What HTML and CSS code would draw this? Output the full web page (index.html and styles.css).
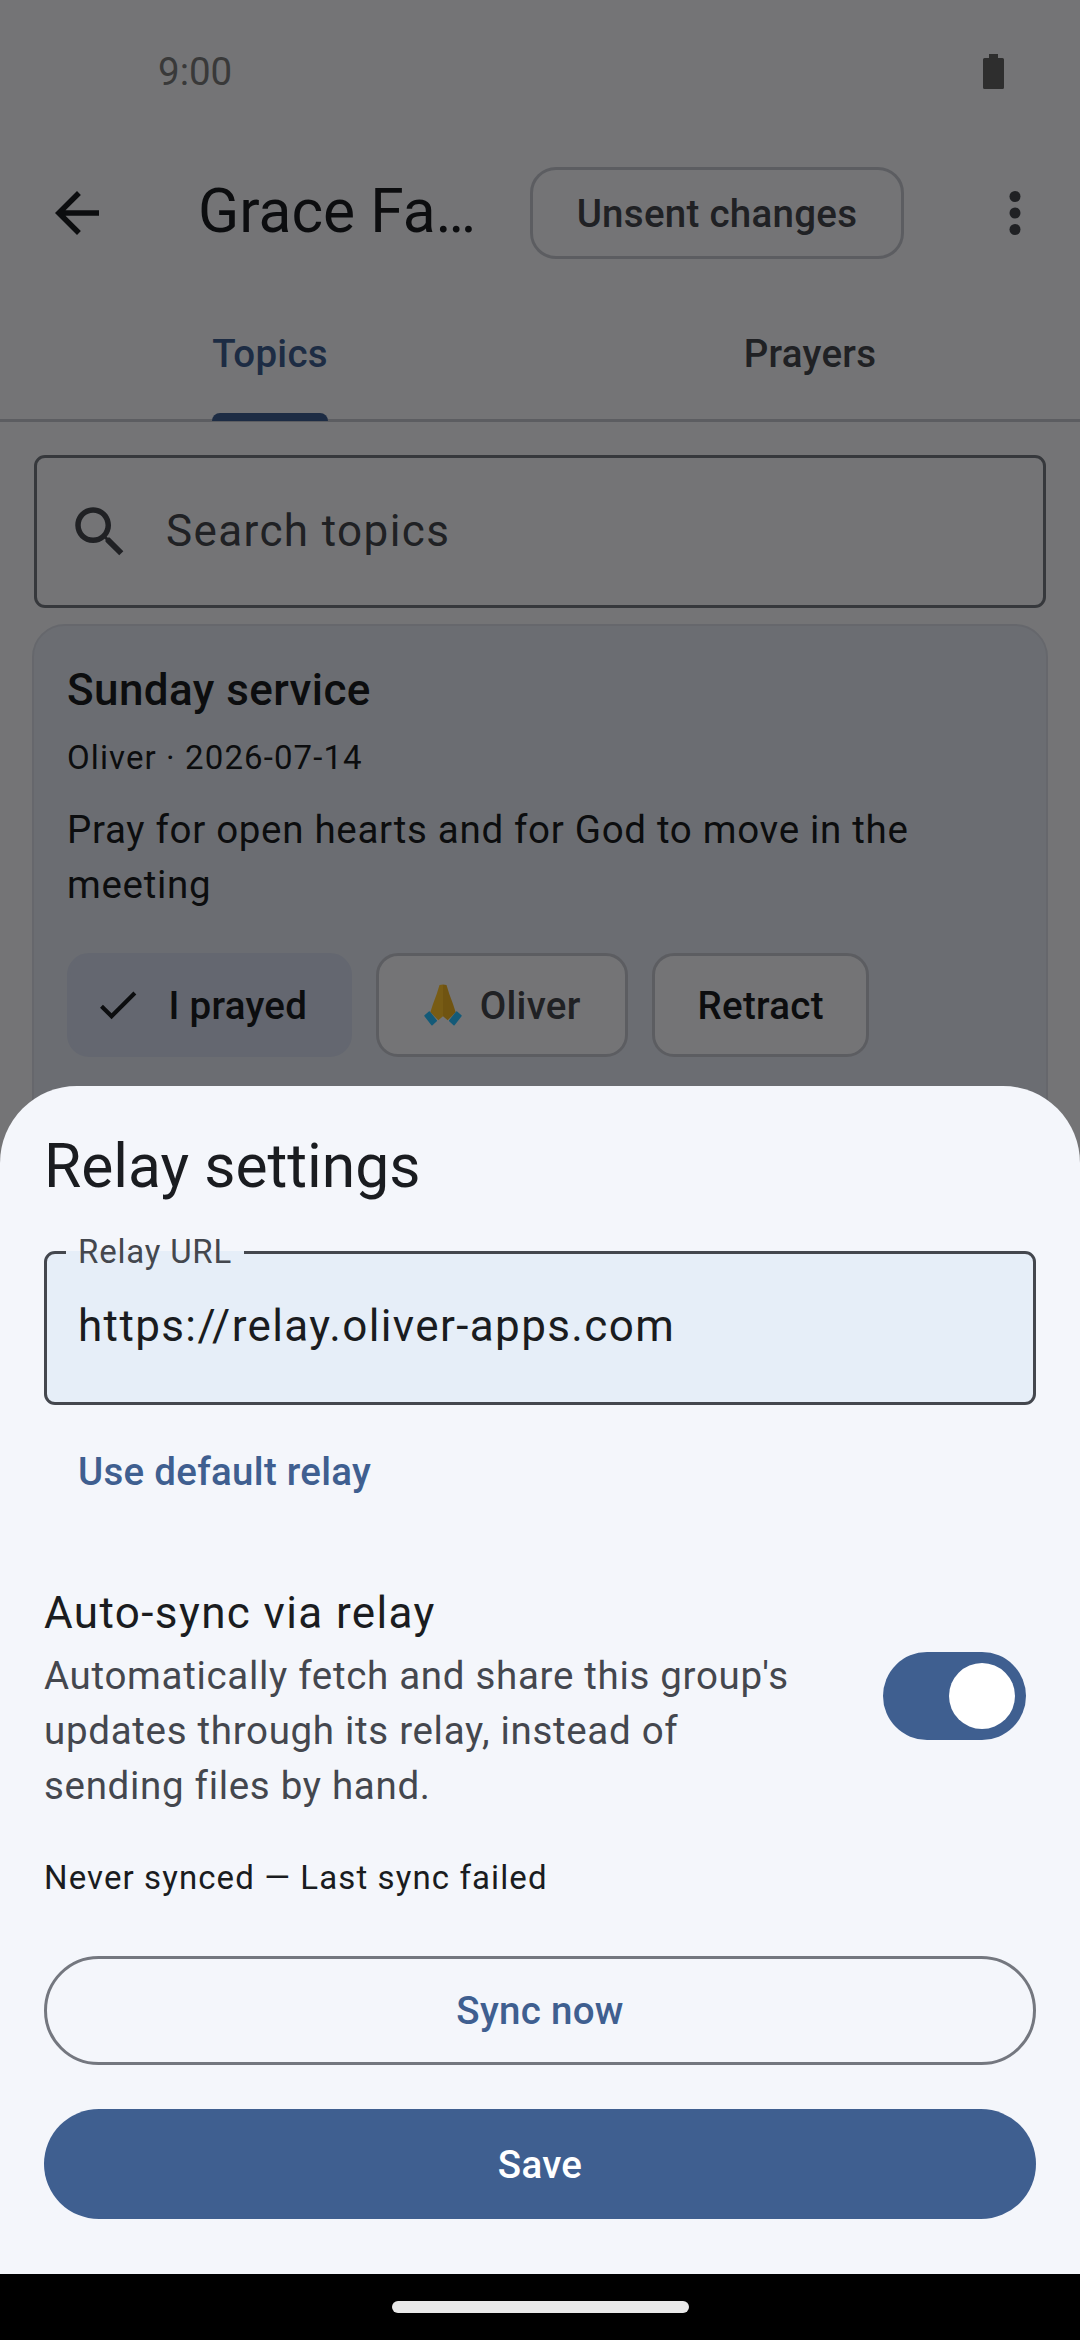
FILE: index.html
```html
<!DOCTYPE html>
<html lang="en">
<head>
  <meta charset="UTF-8">
  <meta name="viewport" content="width=device-width, initial-scale=1.0">
  <title>Relay settings</title>
  <link rel="stylesheet" href="styles.css">
</head>
<body>
  <div class="screen">
    <div class="app">
      <div class="status-bar">
        <span class="time">9:00</span>
        <svg class="battery" viewBox="0 0 21 35"><path d="M6 0h9v4h4.500q1.500 0 1.500 1.500v28q0 1.500-1.500 1.500h-18q-1.500 0-1.500-1.500v-28q0-1.500 1.500-1.500h4.500z"/></svg>
      </div>

      <div class="app-bar">
        <svg class="back-icon" viewBox="0 0 24 24"><path d="M20 11H7.830l5.590-5.590L12 4l-8 8 8 8 1.410-1.410L7.830 13H20v-2z"/></svg>
        <h1 class="group-title">Grace Fa…</h1>
        <div class="unsent-chip">Unsent changes</div>
        <svg class="more-icon" viewBox="0 0 24 24"><circle cx="12" cy="6" r="2"/><circle cx="12" cy="12" r="2"/><circle cx="12" cy="18" r="2"/></svg>
      </div>

      <div class="tabs">
        <div class="tab tab-active"><div class="tab-inner"><span>Topics</span><div class="tab-bar"></div></div></div>
        <div class="tab"><div class="tab-inner"><span>Prayers</span></div></div>
      </div>

      <div class="search-box">
        <svg class="search-icon" viewBox="0 0 24 24"><path d="M15.500 14h-.79l-.28-.27C15.410 12.590 16 11.110 16 9.500 16 5.910 13.090 3 9.500 3S3 5.910 3 9.500 5.910 16 9.500 16c1.610 0 3.090-.59 4.230-1.570l.27.28v.79l5 4.990L20.490 19l-4.990-5zm-6 0C7.010 14 5 11.990 5 9.500S7.010 5 9.500 5 14 7.010 14 9.500 11.990 14 9.500 14z"/></svg>
        <span class="search-text">Search topics</span>
      </div>

      <div class="topic-card">
        <h2 class="topic-title">Sunday service</h2>
        <p class="topic-meta">Oliver · 2026-07-14</p>
        <p class="topic-body">Pray for open hearts and for God to move in the meeting</p>
        <div class="chip-row">
          <div class="chip chip-selected">
            <svg class="check-icon" viewBox="0 0 24 24"><path d="M9 16.170L4.830 12l-1.420 1.410L9 19 21 7l-1.410-1.410z"/></svg>
            I prayed
          </div>
          <div class="chip chip-name">
            <!-- folded hands emoji -->
            <svg class="hands-icon" viewBox="0 0 38 42">
              <path class="hand" d="M19 0.500l-3.500.5Q13 10 9 20l-2.700 8.300 8 8L19 32.300z"/>
              <path class="hand-right" d="M19 0.500l3.500.5Q25 10 29 20l2.700 8.300-8 8L19 32.300z"/>
              <path class="cuff" d="M1 31.700l4.300-3.700 7 8.700L8 40.800z"/>
              <path class="cuff" d="M37 31.700l-4.300-3.700-7 8.700 4.300 4.100z"/>
            </svg>
            Oliver
          </div>
          <div class="chip chip-retract">Retract</div>
        </div>
      </div>
    </div>

    <div class="nav-bar"><div class="nav-pill"></div></div>

    <div class="scrim"></div>

    <div class="sheet">
      <h2 class="sheet-title">Relay settings</h2>

      <fieldset class="url-field">
        <legend>Relay URL</legend>
        <div class="url-value">https://relay.oliver-apps.com</div>
      </fieldset>

      <div class="default-link">Use default relay</div>

      <div class="sync-row">
        <div class="sync-copy">
          <div class="sync-title">Auto-sync via relay</div>
          <p class="sync-desc">Automatically fetch and share this group's updates through its relay, instead of sending files by hand.</p>
        </div>
        <div class="switch"><div class="switch-thumb"></div></div>
      </div>

      <p class="sync-status">Never synced — Last sync failed</p>

      <div class="btn btn-outline">Sync now</div>
      <div class="btn btn-filled">Save</div>
    </div>
  </div>
</body>
</html>
```

FILE: styles.css
```css
* {
  box-sizing: border-box;
}

body {
  margin: 0;
  font-family: Roboto, "Noto Sans", sans-serif;
  color: #1a1c20;
}

h1, h2, p {
  margin: 0;
  font-weight: 400;
}

.screen {
  position: relative;
  width: 1080px;
  height: 2340px;
  display: flex;
  flex-direction: column;
  overflow: hidden;
  background-color: #f6f7fb;
}

.app {
  flex: 1;
  min-height: 0;
  display: flex;
  flex-direction: column;
}

/* status bar */
.status-bar {
  height: 142px;
  flex-shrink: 0;
  display: flex;
  align-items: center;
  justify-content: space-between;
  padding: 0 76px 0 158px;
}

.time {
  font-size: 38.5px;
  color: #7a7a7a;
}

.battery {
  width: 21px;
  height: 35px;
  fill: #626262;
}

/* app bar */
.app-bar {
  height: 142px;
  flex-shrink: 0;
  display: flex;
  align-items: center;
  padding-left: 44px;
}

.back-icon {
  width: 66px;
  height: 66px;
  flex-shrink: 0;
  fill: #1a1c20;
}

.group-title {
  font-size: 60.5px;
  margin-left: 88px;
  margin-bottom: 3px;
  width: 332px;
  white-space: nowrap;
}

.unsent-chip {
  width: 374px;
  height: 92px;
  display: flex;
  align-items: center;
  justify-content: center;
  border: 3px solid #c4c6cf;
  border-radius: 26px;
  font-size: 38.5px;
  font-weight: 500;
  letter-spacing: 0.28px;
  color: #44474e;
}

.more-icon {
  width: 66px;
  height: 66px;
  margin-left: 78px;
  fill: #44474e;
}

/* tabs */
.tabs {
  height: 138px;
  flex-shrink: 0;
  display: flex;
  border-bottom: 3px solid #c4c6cf;
}

.tab {
  flex: 1;
  display: flex;
  justify-content: center;
  font-size: 38.5px;
  font-weight: 500;
  letter-spacing: 0.28px;
  color: #44474e;
}

.tab-active {
  color: #3f5f90;
}

.tab-inner {
  display: flex;
  flex-direction: column;
  justify-content: space-between;
  padding-top: 47px;
  margin-bottom: -2px;
}

.tab-bar {
  height: 8px;
  background-color: #3f5f90;
  border-radius: 8px 8px 0 0;
}

/* search */
.search-box {
  flex-shrink: 0;
  height: 153px;
  margin: 33px 34px 0;
  display: flex;
  align-items: center;
  padding-left: 29.5px;
  border: 3px solid #74777f;
  border-radius: 11px;
}

.search-icon {
  width: 66px;
  height: 66px;
  fill: #44474e;
}

.search-text {
  margin-left: 33.5px;
  margin-bottom: 2px;
  font-size: 44px;
  letter-spacing: 1.38px;
  color: #44474e;
}

/* topic card */
.topic-card {
  flex-shrink: 0;
  height: 620px;
  margin: 16px 32px 0;
  padding: 36px 33px;
  background-color: #e3e8f3;
  border: 2px solid #d8dce6;
  border-radius: 33px;
}

.topic-title {
  font-size: 44px;
  font-weight: 500;
  line-height: 56px;
  letter-spacing: 0.41px;
}

.topic-meta {
  margin-top: 18px;
  font-size: 33px;
  line-height: 44px;
  letter-spacing: 1.1px;
}

.topic-body {
  margin-top: 22px;
  font-size: 38.5px;
  line-height: 55px;
  letter-spacing: 0.69px;
}

.chip-row {
  display: flex;
  gap: 24px;
  margin-top: 41px;
}

.chip {
  height: 104px;
  display: flex;
  align-items: center;
  padding: 0 44.5px;
  border: 3px solid #c4c6cf;
  border-radius: 22px;
  background-color: #f6f7fb;
  font-size: 38.5px;
  font-weight: 500;
  letter-spacing: 0.28px;
  white-space: nowrap;
}

.chip-selected {
  padding: 0 42px 0 23px;
  background-color: #d4dbed;
  border-color: #d4dbed;
}

.chip-name {
  color: #44474e;
}

.chip-retract {
  padding: 0 42.5px;
}

.check-icon {
  width: 49.5px;
  height: 49.5px;
  margin-right: 26px;
  fill: #1a1c20;
}

.hands-icon {
  width: 38px;
  height: 42px;
  margin-right: 18px;
}

.hand {
  fill: #ffc42e;
}

.hand-right {
  fill: #efb226;
}

.cuff {
  fill: #2bc0ff;
  stroke: #2bc0ff;
  stroke-width: 1.500;
  stroke-linejoin: round;
}

/* dim layer and bottom sheet lie over the page */
.scrim {
  position: absolute;
  left: 0;
  right: 0;
  top: 0;
  bottom: 66px;
  background-color: rgba(0, 0, 0, 0.53);
}

.sheet {
  position: absolute;
  left: 0;
  right: 0;
  bottom: 66px;
  height: 1188px;
  padding: 45px 44px 0;
  background-color: #f4f6fb;
  border-radius: 77px 77px 0 0;
}

.sheet-title {
  font-size: 60.5px;
  line-height: 72px;
}

.url-field {
  margin: 34px 0 0;
  padding: 0 0 0 31px;
  height: 168px;
  background-color: #e6eef8;
  border: 3px solid #44474e;
  border-radius: 11px;
}

.url-field legend {
  padding: 0 12px;
  margin-left: -12px;
  font-size: 33px;
  line-height: 30px;
  letter-spacing: 0.8px;
  color: #44474e;
}

.url-value {
  margin-top: 31px;
  font-size: 44px;
  line-height: 56px;
  letter-spacing: 1.38px;
}

.default-link {
  margin-top: 43px;
  padding-left: 34px;
  font-size: 38.5px;
  font-weight: 500;
  line-height: 48px;
  letter-spacing: 0.28px;
  color: #3f5f90;
}

.sync-row {
  margin-top: 89px;
  display: flex;
  align-items: center;
  justify-content: space-between;
  padding-right: 10px;
}

.sync-copy {
  width: 760px;
}

.sync-title {
  font-size: 44px;
  line-height: 56px;
  letter-spacing: 1.38px;
}

.sync-desc {
  margin-top: 7px;
  font-size: 38.5px;
  line-height: 55px;
  letter-spacing: 0.69px;
  color: #44474e;
}

.switch {
  width: 143px;
  height: 88px;
  margin-bottom: 6px;
  display: flex;
  align-items: center;
  justify-content: flex-end;
  padding-right: 11px;
  background-color: #3f5f90;
  border-radius: 44px;
}

.switch-thumb {
  width: 66px;
  height: 66px;
  background-color: #fff;
  border-radius: 50%;
}

.sync-status {
  margin-top: 43px;
  font-size: 33px;
  line-height: 44px;
  letter-spacing: 1.1px;
}

.btn {
  display: flex;
  align-items: center;
  justify-content: center;
  font-size: 38.5px;
  font-weight: 500;
  letter-spacing: 0.28px;
  border-radius: 55px;
}

.btn-outline {
  height: 109px;
  margin-top: 56px;
  border: 3px solid #74777f;
  color: #3f5f90;
}

.btn-filled {
  height: 110px;
  margin-top: 44px;
  background-color: #3f5f90;
  color: #fff;
}

/* gesture bar */
.nav-bar {
  height: 66px;
  flex-shrink: 0;
  display: flex;
  justify-content: center;
  padding-top: 27px;
  background-color: #000;
}

.nav-pill {
  width: 297px;
  height: 12px;
  background-color: #e9e9e9;
  border-radius: 6px;
}
```
